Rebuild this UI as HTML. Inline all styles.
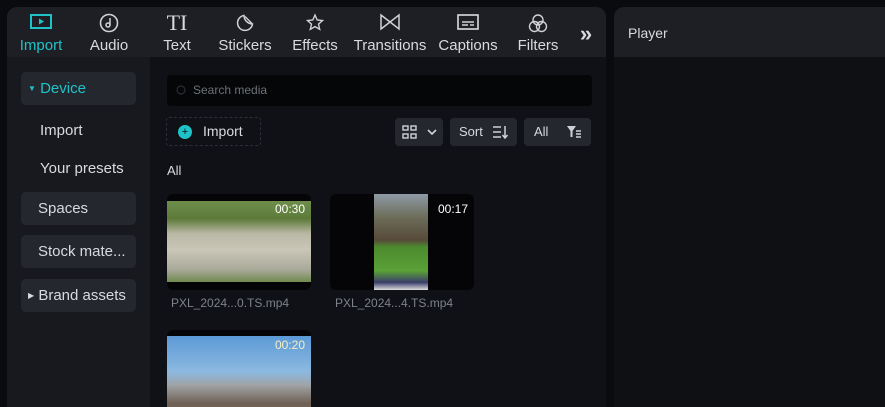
<!DOCTYPE html>
<html><head><style>
*{margin:0;padding:0;box-sizing:border-box}
body{width:885px;height:403px;background:#0a0b0e;font-family:"Liberation Sans",sans-serif;position:relative;overflow:hidden;color:#d8dadf}
.abs{position:absolute}
#left{left:7px;top:7px;width:599px;height:400px;background:#0f1116;border-radius:10px 10px 0 0;overflow:hidden}
#tabs{left:0;top:0;width:599px;height:50px;background:#1d1f25}
.tab{position:absolute;top:0;height:50px;text-align:center;font-size:15px;color:#d8dadf}
.tab svg{position:absolute;top:6px;left:50%;transform:translateX(-50%)}
.tab span{position:absolute;top:30px;left:-10px;right:-10px;white-space:nowrap}
#side{left:0;top:50px;width:143px;height:360px;background:#17191e}
.sb{position:absolute;left:14px;width:115px;height:33px;border-radius:5px;background:#24272e;font-size:15px;line-height:33px;padding-left:17px;color:#d8dadf;white-space:nowrap}
.st{position:absolute;left:33px;font-size:15px;color:#d8dadf}
.btn{position:absolute;top:111px;height:28px;border-radius:4px;background:#24272e;font-size:13px;line-height:28px;color:#d8dadf}
.th{position:absolute;width:144px;height:96px;border-radius:6px;background:#050507;overflow:hidden}
.dur{position:absolute;right:6px;top:8px;font-size:12px;color:#fff}
.nm{position:absolute;font-size:12px;color:#7d828b}
#player{left:614px;top:7px;width:280px;height:400px;background:#0e1014;border-radius:10px 0 0 0;overflow:hidden}
</style></head><body>
<div id="left" class="abs">
  <div id="tabs" class="abs">
    <div class="tab" style="left:5px;width:58px;color:#1fc3c7"><svg width="24" height="18" viewBox="0 0 24 18"><rect x="2" y="2" width="20" height="13" fill="none" stroke="#1fc3c7" stroke-width="2"/><path d="M10 5.5v6l5-3z" fill="#1fc3c7"/></svg><span>Import</span></div>
    <div class="tab" style="left:73px;width:58px"><svg width="20" height="20" viewBox="0 0 20 20"><circle cx="10" cy="10" r="8.5" fill="none" stroke="#cfd1d6" stroke-width="1.6"/><circle cx="9" cy="12" r="2" fill="none" stroke="#cfd1d6" stroke-width="1.5"/><path d="M11 12V5" stroke="#cfd1d6" stroke-width="1.5"/></svg><span>Audio</span></div>
    <div class="tab" style="left:142px;width:56px"><span style="top:3px;font-family:'Liberation Serif',serif;font-size:22px">TI</span><span>Text</span></div>
    <div class="tab" style="left:206px;width:64px"><svg width="20" height="20" viewBox="0 0 20 20"><path d="M17.5 11A7.5 7.5 0 1 1 9 2.5c0 4 3 8 8.5 8.5z" fill="none" stroke="#cfd1d6" stroke-width="1.5"/><path d="M10 3.5l7 7" stroke="#cfd1d6" stroke-width="1.3"/></svg><span>Stickers</span></div>
    <div class="tab" style="left:280px;width:56px"><svg width="20" height="20" viewBox="0 0 20 20"><path d="M10 2l2.2 5 5.3.5-4 3.6 1.2 5.2L10 13.6 5.3 16.3l1.2-5.2-4-3.6 5.3-.5z" fill="none" stroke="#cfd1d6" stroke-width="1.4"/></svg><span>Effects</span></div>
    <div class="tab" style="left:345px;width:76px"><svg width="22" height="18" viewBox="0 0 22 18"><path d="M2 2v14l18-14v14z" fill="none" stroke="#cfd1d6" stroke-width="1.5"/></svg><span>Transitions</span></div>
    <div class="tab" style="left:428px;width:66px"><svg width="24" height="18" viewBox="0 0 24 18"><rect x="2" y="2" width="20" height="14" fill="none" stroke="#cfd1d6" stroke-width="1.7"/><path d="M6 9h12M6 12h6M14 12h4" stroke="#cfd1d6" stroke-width="1.5"/></svg><span>Captions</span></div>
    <div class="tab" style="left:504px;width:54px"><svg width="22" height="22" viewBox="0 0 22 22"><circle cx="11" cy="7" r="5" fill="none" stroke="#cfd1d6" stroke-width="1.4"/><circle cx="7.5" cy="13.5" r="5" fill="none" stroke="#cfd1d6" stroke-width="1.4"/><circle cx="14.5" cy="13.5" r="5" fill="none" stroke="#cfd1d6" stroke-width="1.4"/></svg><span>Filters</span></div>
    <div class="tab" style="left:566px;width:26px"><span style="top:14px;font-size:22px;font-weight:bold">»</span></div>
  </div>
  <div id="side" class="abs">
    <div class="sb" style="top:15px;color:#1fc3c7;padding-left:7px"><span style="font-size:8px;vertical-align:2px">▼</span> Device</div>
    <div class="st" style="top:65px">Import</div>
    <div class="st" style="top:103px">Your presets</div>
    <div class="sb" style="top:135px">Spaces</div>
    <div class="sb" style="top:178px">Stock mate...</div>
    <div class="sb" style="top:222px;padding-left:7px"><span style="font-size:8px;vertical-align:2px">▶</span> Brand assets</div>
  </div>
  <div class="abs" style="left:160px;top:68px;width:425px;height:31px;background:#050608;border-radius:4px;font-size:12px;color:#6c7078;line-height:31px;padding-left:26px">Search media<svg class="abs" style="left:9px;top:10px" width="11" height="11" viewBox="0 0 11 11"><circle cx="5" cy="5" r="4" fill="none" stroke="#2a2d33" stroke-width="1.2"/></svg></div>
  <div class="abs" style="left:159px;top:110px;width:95px;height:29px;border:1px dashed #2c2f36;border-radius:3px;font-size:14px;line-height:27px;padding-left:36px">Import<div class="abs" style="left:11px;top:7px;width:14px;height:14px;border-radius:50%;background:#1fc3c7;color:#0f1116;font-size:11px;line-height:14px;text-align:center">+</div></div>
  <div class="btn" style="left:388px;width:48px"><svg class="abs" style="left:7px;top:7px" width="16" height="14" viewBox="0 0 16 14"><rect x="1" y="1" width="5" height="4" fill="none" stroke="#cfd1d6" stroke-width="1.4"/><rect x="9" y="1" width="5" height="4" fill="none" stroke="#cfd1d6" stroke-width="1.4"/><rect x="1" y="9" width="5" height="4" fill="none" stroke="#cfd1d6" stroke-width="1.4"/><rect x="9" y="9" width="5" height="4" fill="none" stroke="#cfd1d6" stroke-width="1.4"/></svg><svg class="abs" style="left:32px;top:11px" width="10" height="6" viewBox="0 0 10 6"><path d="M1 1l4 4 4-4" fill="none" stroke="#cfd1d6" stroke-width="1.6"/></svg></div>
  <div class="btn" style="left:443px;width:67px;padding-left:9px">Sort<svg class="abs" style="left:42px;top:7px" width="16" height="14" viewBox="0 0 16 14"><path d="M1 2h8M1 7h8M1 12h8M13 1v12M10.5 10l2.5 3 2.5-3" fill="none" stroke="#cfd1d6" stroke-width="1.5"/></svg></div>
  <div class="btn" style="left:517px;width:67px;padding-left:10px">All<svg class="abs" style="left:42px;top:7px" width="16" height="14" viewBox="0 0 16 14"><path d="M1 1h9L6.5 6v6L4.5 12V6z" fill="#cfd1d6"/><path d="M10 6h5M10 9h5M10 12h5" stroke="#cfd1d6" stroke-width="1.4"/></svg></div>
  <div class="abs" style="left:160px;top:156px;font-size:13px">All</div>
  <div class="th" style="left:160px;top:187px"><div class="abs" style="left:0;top:7px;width:144px;height:81px;background:linear-gradient(180deg,#6f8e4a 0%,#5d7a3a 22%,#b9b7a4 40%,#c9c6b8 60%,#a9a99a 85%,#718a4f 100%)"></div><div class="dur">00:30</div></div>
  <div class="nm" style="left:164px;top:289px">PXL_2024...0.TS.mp4</div>
  <div class="th" style="left:323px;top:187px"><div class="abs" style="left:44px;top:0;width:54px;height:96px;background:linear-gradient(180deg,#8e9aa5 0%,#6b6b57 25%,#584a3a 48%,#4c8a2f 55%,#5aa136 80%,#3a3e6a 92%,#ddd 100%)"></div><div class="dur">00:17</div></div>
  <div class="nm" style="left:328px;top:289px">PXL_2024...4.TS.mp4</div>
  <div class="th" style="left:160px;top:323px"><div class="abs" style="left:0;top:6px;width:144px;height:90px;background:linear-gradient(180deg,#5c9ad6 0%,#8cb9e0 40%,#a0a2a4 55%,#6f6055 75%,#8a7360 100%)"></div><div class="dur" style="color:#f3eec8">00:20</div></div>
</div>
<div id="player" class="abs">
  <div class="abs" style="left:0;top:0;width:280px;height:50px;background:#1d1f25;font-size:14px;line-height:52px;padding-left:14px">Player</div>
</div>
</body></html>
